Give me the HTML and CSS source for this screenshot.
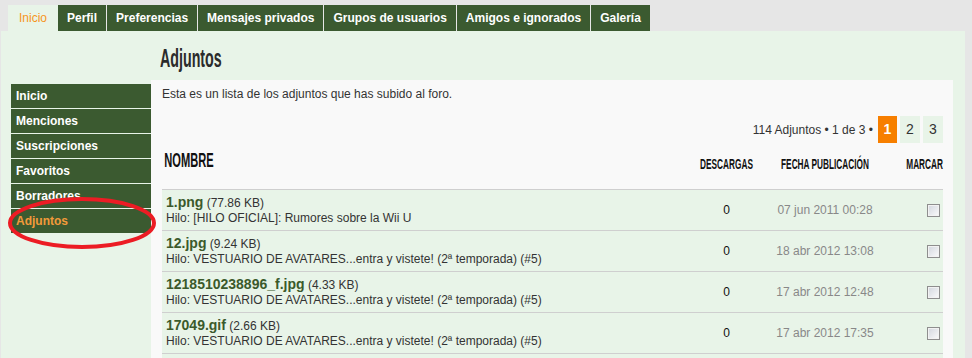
FILE: index.html
```html
<!DOCTYPE html>
<html lang="es">
<head>
  <meta charset="UTF-8" />
  <title>Panel de control - Adjuntos</title>
  <link rel="stylesheet" href="styles.css">
</head>
<body>

  <ul class="tabs">
    <li class="tab active">Inicio</li>
    <li class="tab">Perfil</li>
    <li class="tab">Preferencias</li>
    <li class="tab">Mensajes privados</li>
    <li class="tab">Grupos de usuarios</li>
    <li class="tab">Amigos e ignorados</li>
    <li class="tab">Galería</li>
  </ul>

  <div class="panel">
    <div class="side">
      <ul class="side-menu">
        <li>Inicio</li>
        <li>Menciones</li>
        <li>Suscripciones</li>
        <li>Favoritos</li>
        <li>Borradores</li>
        <li class="active">Adjuntos</li>
      </ul>
    </div>

    <div class="main">
      <h2 class="page-title"><span class="oswald">Adjuntos</span></h2>

      <div class="box">
        <p class="intro">Esta es un lista de los adjuntos que has subido al foro.</p>

        <div class="pagination">
          <span class="count">114 Adjuntos • 1 de 3 •</span>
          <span class="page current">1</span>
          <span class="page">2</span>
          <span class="page">3</span>
        </div>

        <table class="attachments">
          <colgroup>
            <col>
            <col class="col-downloads">
            <col class="col-date">
            <col class="col-mark">
          </colgroup>
          <thead>
            <tr>
              <th class="th-name"><span class="oswald">NOMBRE</span></th>
              <th class="th-center"><span class="oswald">DESCARGAS</span></th>
              <th class="th-center"><span class="oswald">FECHA PUBLICACIÓN</span></th>
              <th class="th-right"><span class="oswald">MARCAR</span></th>
            </tr>
          </thead>
          <tbody>
            <tr>
              <td class="name">
                <div class="file-line"><a class="file">1.png</a> (77.86 KB)</div>
                <div class="thread">Hilo: [HILO OFICIAL]: Rumores sobre la Wii U</div>
              </td>
              <td class="downloads">0</td>
              <td class="date">07 jun 2011 00:28</td>
              <td class="mark"><input type="checkbox"></td>
            </tr>
            <tr>
              <td class="name">
                <div class="file-line"><a class="file">12.jpg</a> (9.24 KB)</div>
                <div class="thread">Hilo: VESTUARIO DE AVATARES...entra y vistete! (2ª temporada) (#5)</div>
              </td>
              <td class="downloads">0</td>
              <td class="date">18 abr 2012 13:08</td>
              <td class="mark"><input type="checkbox"></td>
            </tr>
            <tr>
              <td class="name">
                <div class="file-line"><a class="file">1218510238896_f.jpg</a> (4.33 KB)</div>
                <div class="thread">Hilo: VESTUARIO DE AVATARES...entra y vistete! (2ª temporada) (#5)</div>
              </td>
              <td class="downloads">0</td>
              <td class="date">17 abr 2012 12:48</td>
              <td class="mark"><input type="checkbox"></td>
            </tr>
            <tr>
              <td class="name">
                <div class="file-line"><a class="file">17049.gif</a> (2.66 KB)</div>
                <div class="thread">Hilo: VESTUARIO DE AVATARES...entra y vistete! (2ª temporada) (#5)</div>
              </td>
              <td class="downloads">0</td>
              <td class="date">17 abr 2012 17:35</td>
              <td class="mark"><input type="checkbox"></td>
            </tr>
            <tr class="row-more">
              <td colspan="4"></td>
            </tr>
          </tbody>
        </table>
      </div>
    </div>

    <!-- marca roja a mano alrededor de "Adjuntos" -->
    <svg class="scribble" width="154" height="56" viewBox="0 0 154 56">
      <ellipse cx="76" cy="28" rx="72" ry="24" fill="none" stroke="#ec1c24" stroke-width="4"></ellipse>
    </svg>
  </div>

</body>
</html>
```

FILE: styles.css
```css
:root {
  --dark-green: #3b5a30;
  --light-green: #e8f4e8;
  --page-gray: #e6e6e6;
  --box-bg: #f9f9f9;
  --orange: #f7941d;
  --text-color: #333;
}

body {
  margin: 0;
  background-color: var(--page-gray);
  font-family: "Liberation Sans", Arial, sans-serif;
  font-size: 12px;
  color: var(--text-color);
  overflow: hidden;
}

.oswald {
  display: block;
  font-family: "Liberation Sans", Arial, sans-serif;
  font-weight: bold;
  transform: scaleX(.57);
  white-space: nowrap;
}

/* pestañas superiores */

.tabs {
  display: flex;
  list-style: none;
  margin: 0;
  padding: 5px 0 0 8px;
}

.tab {
  height: 26px;
  line-height: 26px;
  padding: 0 9px;
  margin-right: 1px;
  background-color: var(--dark-green);
  color: #fff;
  font-weight: bold;
}

.tab.active {
  padding: 0 11px;
  margin-right: 0;
  background-color: var(--light-green);
  color: var(--orange);
  font-weight: normal;
}

/* panel */

.panel {
  position: relative;
  display: grid;
  grid-template-columns: 140px 802px;
  width: 954px;
  min-height: 340px;
  margin-left: 1px;
  padding-left: 10px;
  background-color: var(--light-green);
}

.side {
  padding-top: 53px;
}

.side-menu {
  list-style: none;
  margin: 0;
  padding: 0;
}

.side-menu li {
  height: 24px;
  line-height: 24px;
  padding-left: 5px;
  margin-bottom: 1px;
  background-color: var(--dark-green);
  color: #fff;
  font-weight: bold;
}

.side-menu li.active {
  color: #f29a3a;
}

.page-title {
  height: 37px;
  margin: 0;
  padding: 12px 0 0 9px;
  font-size: 25px;
  line-height: 30px;
  color: #2b2b2b;
}

.page-title .oswald {
  transform-origin: left center;
}

.box {
  background-color: var(--box-bg);
  padding: 7px 10px 0 11px;
  min-height: 300px;
}

.intro {
  margin: 0;
  line-height: 15px;
}

.pagination {
  display: flex;
  justify-content: flex-end;
  align-items: center;
  gap: 3px;
  margin-top: 14px;
}

.count {
  margin-right: 2px;
}

.page {
  width: 20px;
  height: 27px;
  line-height: 27px;
  text-align: center;
  font-size: 14px;
  background-color: var(--light-green);
}

.page.current {
  width: 19px;
  background-color: #f77f00;
  color: #fff;
  font-weight: bold;
}

/* tabla de adjuntos */

.attachments {
  width: 100%;
  margin-top: 6px;
  border-collapse: collapse;
  table-layout: fixed;
}

.col-downloads { width: 77px; }
.col-date { width: 120px; }
.col-mark { width: 58px; }

.attachments th {
  height: 40px;
  padding: 0;
  vertical-align: top;
  color: #111;
  border-bottom: 1px solid #cfcfcf;
}

.th-name .oswald {
  font-size: 19.5px;
  line-height: 22px;
  padding-left: 4px;
  text-align: left;
  transform-origin: left center;
}

.th-center .oswald,
.th-right .oswald {
  font-size: 14.5px;
  line-height: 17px;
}

/* el texto sin comprimir es más ancho que la columna */
.th-center .oswald {
  margin: 7px -60px 0;
  text-align: center;
  transform-origin: center;
}

.th-right .oswald {
  margin: 7px 0 0 -60px;
  text-align: right;
  transform-origin: right center;
}

.attachments td {
  background-color: var(--light-green);
  border-bottom: 1px solid #cfcfcf;
  vertical-align: middle;
}

.attachments td.name {
  padding: 4px 4px 5px;
}

.file-line {
  line-height: 16px;
}

.file {
  font-size: 14px;
  font-weight: bold;
  color: #3b5a2b;
}

.thread {
  line-height: 14px;
}

.downloads {
  text-align: center;
  color: #111;
}

.date {
  text-align: center;
  color: #888;
}

.mark {
  text-align: right;
  padding-right: 3px;
}

.mark input {
  appearance: none;
  width: 13px;
  height: 13px;
  margin: 0;
  vertical-align: middle;
  border: 1px solid #8e8e8e;
  background: linear-gradient(135deg, #d2d6de, #fbfbfb);
  box-shadow: inset 0 0 0 1px #f2f2f2;
}

.row-more td {
  height: 40px;
}

.scribble {
  position: absolute;
  left: 5px;
  top: 164px;
}
```
